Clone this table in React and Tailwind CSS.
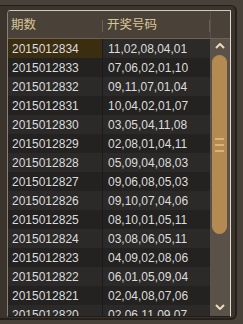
import React from 'react';

const rows = [
  ['2015012834', '11,02,08,04,01'],
  ['2015012833', '07,06,02,01,10'],
  ['2015012832', '09,11,07,01,04'],
  ['2015012831', '10,04,02,01,07'],
  ['2015012830', '03,05,04,11,08'],
  ['2015012829', '02,08,01,04,11'],
  ['2015012828', '05,09,04,08,03'],
  ['2015012827', '09,06,08,05,03'],
  ['2015012826', '09,10,07,04,06'],
  ['2015012825', '08,10,01,05,11'],
  ['2015012824', '03,08,06,05,11'],
  ['2015012823', '04,09,02,08,06'],
  ['2015012822', '06,01,05,09,04'],
  ['2015012821', '02,04,08,07,06'],
  ['2015012820', '02,06,11,09,07'],
];

export default function App() {
  return (
    <div
      className="h-[324px] w-[243px] overflow-hidden bg-[#48413a] pr-[6px] pt-[5px]"
      style={{ fontFamily: '"Liberation Sans", "Noto Sans CJK SC", sans-serif' }}
    >
      {/* outer frame */}
      <div className="h-[315px] w-[237px] rounded-br-[6px] rounded-tr-[6px] border-r-2 border-t border-b-2 border-[#25201b] bg-[#3b342d] pl-[7px] pr-[4px] pt-[4px]">
        <div className="flex h-[307px] overflow-hidden rounded-tl-[4px] border border-[#8a8076] border-b-[#1e1b18] border-r-[#e0dbd2] border-t-[#d0cac0] bg-[#232220]">
          {/* table */}
          <div className="flex w-[202px] flex-col">
            <div className="flex h-[28px] shrink-0 items-center border-b border-[#6d6253] bg-[#4a4238] pt-[2px] text-[12.5px] text-[#d8c596]">
              <div className="flex h-full w-[94px] items-center pl-[3px]">期数</div>
              <div className="h-[12px] w-px bg-[#6a6056]" />
              <div className="flex h-full flex-1 items-center pl-[4px]">开奖号码</div>
              <div className="h-[12px] w-px bg-[#6a6056]" />
            </div>
            {rows.map(([id, nums], i) => (
              <div
                key={id}
                className={`flex h-[19px] shrink-0 items-center text-[12px] text-[#dcdcdc] ${i % 2 === 0 ? 'bg-[#2b2a28]' : 'bg-[#232220]'}`}
              >
                <div
                  className={`flex h-full w-[94px] items-center pl-[4px] ${i === 0 ? 'bg-[#3b2d10]' : ''}`}
                >
                  {id}
                </div>
                <div className="h-full w-px bg-[#1c1b1a]" />
                <div className="flex h-full flex-1 items-center pl-[5px]">{nums}</div>
              </div>
            ))}
          </div>
          {/* scrollbar */}
          <div className="flex w-[20px] flex-col">
            <div className="h-[28px] shrink-0 border-b border-l border-[#6d6253] border-l-[#5a5146] bg-[#4a4238]" />
            <div className="relative flex-1 bg-[#5a5249]">
              <svg className="absolute left-[5px] top-[4px]" width="10" height="6" viewBox="0 0 10 6">
                <path d="M1 5 L5 1 L9 5" stroke="#e8dcc0" strokeWidth="2" fill="none" />
              </svg>
              <div className="absolute left-[2px] top-[16px] flex h-[179px] w-[15px] flex-col items-center justify-center gap-[4px] rounded-full bg-[#b48a52]">
                <div className="h-[2px] w-[9px] bg-[#d8b47a]" />
                <div className="h-[2px] w-[9px] bg-[#d8b47a]" />
                <div className="h-[2px] w-[9px] bg-[#d8b47a]" />
              </div>
              <svg className="absolute bottom-[6px] left-[5px]" width="10" height="6" viewBox="0 0 10 6">
                <path d="M1 1 L5 5 L9 1" stroke="#e8dcc0" strokeWidth="2" fill="none" />
              </svg>
            </div>
          </div>
        </div>
      </div>
    </div>
  );
}
